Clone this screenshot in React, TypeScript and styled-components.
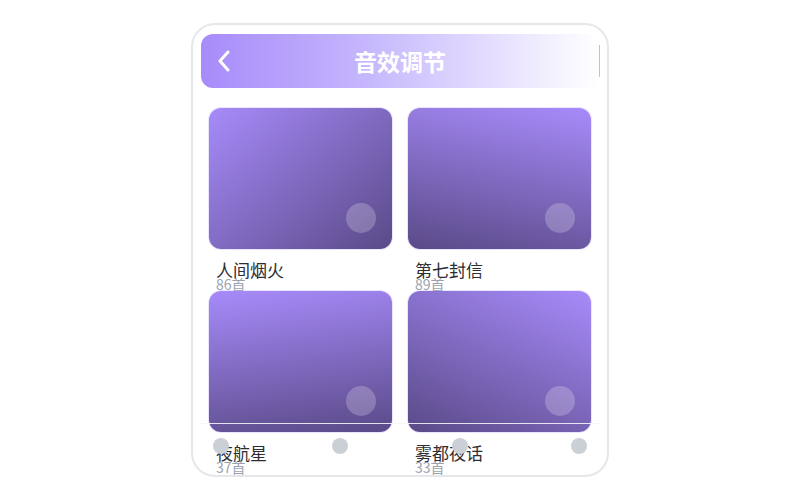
import styled, { createGlobalStyle } from 'styled-components';

const GlobalStyle = createGlobalStyle`
    html, body {
        margin: 0;
        padding: 0;
        background: #ffffff;
    }
    body {
        font-family: "Noto Sans CJK SC", "Noto Sans", sans-serif;
    }
`;

const Page = styled.div`
    display: flex;
    align-items: center;
    justify-content: center;
    width: 800px;
    height: 500px;
`;

const Phone = styled.div`
    position: relative;
    display: flex;
    flex-direction: column;
    width: 418px;
    height: 454px;
    box-sizing: border-box;
    border: 2px solid #e5e7eb;
    border-radius: 24px;
    background: #ffffff;
    overflow: hidden;
`;

const Header = styled.div`
    display: grid;
    grid-template-columns: 56px 1fr 56px;
    align-items: center;
    height: 54px;
    margin: 9px 8px 0;
    border-radius: 12px;
    background: linear-gradient(90deg, #a78bfa 0%, #c4b5fd 40%, #ffffff 100%);
`;

const BackButton = styled.button`
    display: flex;
    align-items: center;
    width: 24px;
    height: 24px;
    margin-left: 16px;
    padding: 0;
    border: none;
    background: transparent;
`;

const Title = styled.h1`
    margin: 0;
    text-align: center;
    color: #ffffff;
    font-size: 23px;
    font-weight: 700;
    line-height: 1;
`;

const HeaderEdge = styled.div`
    justify-self: end;
    width: 1px;
    height: 32px;
    margin-right: -1px;
    background: #c4b5fd;
`;

const Grid = styled.div`
    display: grid;
    grid-template-columns: 1fr 1fr;
    column-gap: 16px;
    padding: 20px 16px 0;
`;

const Item = styled.div`
    display: flex;
    flex-direction: column;
    height: 183px;
`;

const Cover = styled.div<{ $angle: number }>`
    position: relative;
    height: 141px;
    border-radius: 12px;
    background: linear-gradient(${(p) => p.$angle}deg, #a78bfa 0%, #5a4a88 100%);
    box-shadow: 0 0 0 1px rgba(196, 181, 253, 0.35);
`;

const PlayDot = styled.span`
    position: absolute;
    right: 16px;
    bottom: 16px;
    width: 30px;
    height: 30px;
    border-radius: 50%;
    background: rgba(255, 255, 255, 0.22);
`;

const Name = styled.div`
    margin-top: 12px;
    padding-left: 7px;
    color: #2d2d33;
    font-size: 17px;
    line-height: 17px;
`;

const Count = styled.div`
    padding-left: 7px;
    color: #9ca3af;
    font-size: 14px;
    line-height: 13px;
`;

const NavBar = styled.nav`
    position: absolute;
    left: 8px;
    right: 8px;
    bottom: 7px;
    display: flex;
    align-items: center;
    justify-content: space-between;
    height: 44px;
    padding: 0 12px;
    border-top: 1px solid rgba(243, 244, 246, 0.9);
`;

const NavDot = styled.span`
    width: 16px;
    height: 16px;
    border-radius: 50%;
    background: #cbd0d6;
`;

const albums = [
    { name: '人间烟火', count: 86, angle: 140 },
    { name: '第七封信', count: 89, angle: 192 },
    { name: '夜航星', count: 37, angle: 172 },
    { name: '雾都夜话', count: 33, angle: 205 },
];

export default function App() {
    return (
        <Page>
            <GlobalStyle />
            <Phone>
                <Header>
                    <BackButton aria-label="返回">
                        <svg width="14" height="22" viewBox="0 0 14 22" fill="none">
                            <path d="M11 2 3 11l8 9" stroke="#ffffff" strokeWidth="3" strokeLinecap="round" strokeLinejoin="round" />
                        </svg>
                    </BackButton>
                    <Title>音效调节</Title>
                    <HeaderEdge />
                </Header>
                <Grid>
                    {albums.map((a) => (
                        <Item key={a.name}>
                            <Cover $angle={a.angle}>
                                <PlayDot />
                            </Cover>
                            <Name>{a.name}</Name>
                            <Count>{a.count}首</Count>
                        </Item>
                    ))}
                </Grid>
                <NavBar>
                    <NavDot />
                    <NavDot />
                    <NavDot />
                    <NavDot />
                </NavBar>
            </Phone>
        </Page>
    );
}
